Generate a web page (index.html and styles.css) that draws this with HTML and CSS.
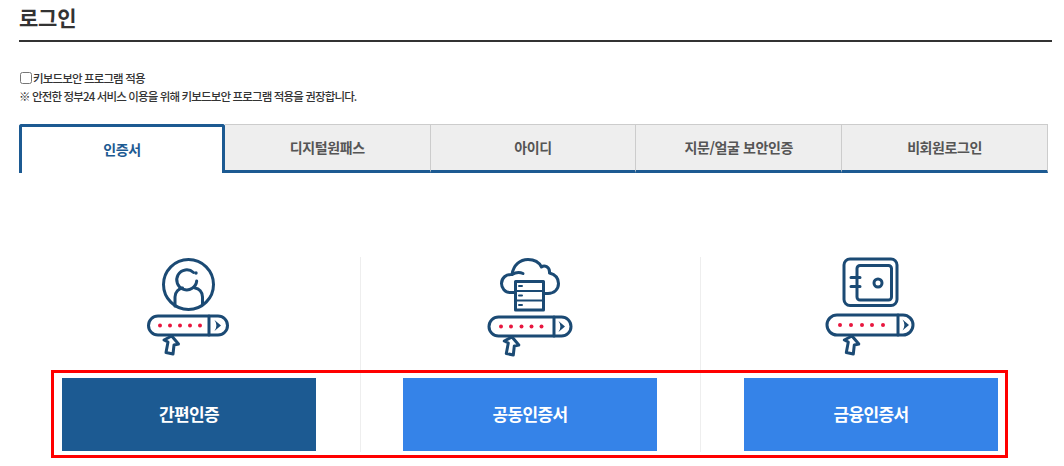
FILE: index.html
```html
<!DOCTYPE html>
<html lang="ko">
<head>
  <title>로그인</title>
  <meta charset="utf-8">
  <meta name="viewport" content="width=device-width, initial-scale=1">
  <link rel="stylesheet" href="styles.css">
</head>
<body>
  <!-- wrapper -->
  <div id="wrapper">
    <h1 class="page-title">로그인</h1>

    <div class="keyboard-area">
      <label class="keyboard-check"><input type="checkbox">키보드보안 프로그램 적용</label>
      <p class="keyboard-note">※ 안전한 정부24 서비스 이용을 위해 키보드보안 프로그램 적용을 권장합니다.</p>
    </div>

    <ul class="tabs">
      <li class="tab active">인증서</li>
      <li class="tab">디지털원패스</li>
      <li class="tab">아이디</li>
      <li class="tab">지문/얼굴 보안인증</li>
      <li class="tab">비회원로그인</li>
    </ul>

    <div class="cert-area">
      <div class="cert">
        <svg class="cert-icon" width="120" height="110" viewBox="-1 0 120 110" fill="none">
          <circle class="line" cx="58.500" cy="33.500" r="25"/>
          <path class="line" d="M63.500 21.500A10 10 0 1 0 66.700 30"/>
          <circle class="fill" cx="66" cy="22" r="1.700"/>
          <path class="line" d="M45 55V46C45 41 49 37.500 52.500 37M65 37C69 37.500 72.500 41 72.500 46V53"/>
          <rect class="line" x="18.500" y="65" width="79" height="19" rx="9.500"/>
          <path class="line" d="M79 65V84"/>
          <path class="fill" d="M84.500 69L91 74.500L84.500 80C87 76.500 87 72.500 84.500 69Z"/>
          <g class="dots"><circle cx="30" cy="74.500" r="2"/><circle cx="40" cy="74.500" r="2"/><circle cx="50" cy="74.500" r="2"/><circle cx="60" cy="74.500" r="2"/><circle cx="70" cy="74.500" r="2"/></g>
          <path class="line pointer" d="M41.700 85L48.500 93L44 94L43 103L36 101.500L38 91L34 89Z"/>
        </svg>
        <a class="cert-btn dark" href="#">간편인증</a>
      </div>
      <div class="cert">
        <svg class="cert-icon" width="120" height="110" viewBox="0 0 120 110" fill="none">
          <path class="line" d="M44 41.500H40C35 41.500 31.500 37 31.500 32.500C31.500 27 36 23 42 23.500C43.500 14 50 8.500 58 8.500C64 8.500 69 11 71.500 16C74 14 80 15 79.500 22C85 23.500 88.500 27.500 88.500 32.500C88.500 38.500 84 42.500 78 42.500H74"/>
          <path class="line" d="M53 22.500C50 21 46 21 42 23.500"/>
          <rect class="line" x="45.500" y="30.500" width="28" height="28.500"/>
          <path class="line thin" d="M45.500 40H73.500M45.500 49.500H73.500"/>
          <path class="line thin" d="M49 35H52M49 44.500H52M49 54H52"/>
          <rect class="line" x="19" y="66" width="82" height="19" rx="9.500"/>
          <path class="line" d="M84 66V85"/>
          <path class="fill" d="M88.500 70L95 75.500L88.500 81C91 77.500 91 73.500 88.500 70Z"/>
          <g class="dots"><circle cx="31" cy="75.500" r="2"/><circle cx="41" cy="75.500" r="2"/><circle cx="51.500" cy="75.500" r="2"/><circle cx="61.500" cy="75.500" r="2"/><circle cx="71.500" cy="75.500" r="2"/></g>
          <path class="line pointer" d="M42 86L48.800 94L44.300 95L43.300 104L36.300 102.500L38.300 92L34.300 90Z"/>
        </svg>
        <a class="cert-btn" href="#">공동인증서</a>
      </div>
      <div class="cert">
        <svg class="cert-icon" width="120" height="110" viewBox="1 0 120 110" fill="none">
          <rect class="line" x="34" y="8" width="53" height="46.500" rx="6"/>
          <rect class="line" x="47" y="14.500" width="34.500" height="34.500" rx="3"/>
          <path class="line" d="M41 26.500H50M41 35.500H50"/>
          <circle class="line" cx="68" cy="32" r="4"/>
          <rect class="line" x="17" y="64" width="86" height="20" rx="10"/>
          <path class="line" d="M88 64V84"/>
          <path class="fill" d="M92.500 68.500L99 74L92.500 79.500C95 76 95 72 92.500 68.500Z"/>
          <g class="dots"><circle cx="30" cy="74" r="2"/><circle cx="41" cy="74" r="2"/><circle cx="52" cy="74" r="2"/><circle cx="62" cy="74" r="2"/><circle cx="73" cy="74" r="2"/></g>
          <path class="line pointer" d="M42 85L48.800 93L44.300 94L43.300 103L36.300 101.500L38.300 91L34.300 89Z"/>
        </svg>
        <a class="cert-btn" href="#">금융인증서</a>
      </div>
      <div class="highlight"></div>
    </div>
  </div>
  <!-- end of wrapper -->
</body>
</html>
```

FILE: styles.css
```css
* {
  box-sizing: border-box;
}
body {
  margin: 0;
  background: #fff;
  font-family: "Noto Sans CJK KR", "Noto Sans", sans-serif;
  color: #333;
}
#wrapper {
  width: 1064px;
  height: 466px;
  padding: 0 12px 0 19px;
  overflow: hidden;
}
.page-title {
  height: 42px;
  margin: 0;
  border-bottom: 2px solid #333;
  font-size: 21px;
  line-height: 34px;
  font-weight: 700;
  letter-spacing: -0.2px;
}
.keyboard-area {
  height: 82px;
  padding-top: 27px;
  font-size: 11.5px;
  font-weight: 500;
  line-height: 18px;
  letter-spacing: -0.86px;
}
.keyboard-check {
  display: flex;
  align-items: center;
  height: 18px;
}
.keyboard-check input {
  width: 12px;
  height: 12px;
  margin: 0 1px 0 1px;
}
.keyboard-note {
  margin: 0;
}
.tabs {
  display: grid;
  grid-template-columns: repeat(5, 1fr);
  width: 1029px;
  height: 49px;
  margin: 0;
  padding: 0;
  list-style: none;
}
.tab {
  display: flex;
  align-items: center;
  justify-content: center;
  height: 49px;
  padding-bottom: 2px;
  border-top: 1px solid #ccc;
  border-right: 1px solid #ccc;
  border-bottom: 3px solid #1c5a92;
  background: #eee;
  font-size: 14px;
  font-weight: 700;
  letter-spacing: -0.4px;
  color: #555;
}
.tab.active {
  border: 3px solid #1c5a92;
  border-bottom: 0;
  border-radius: 3px 3px 0 0;
  background: #fff;
  color: #1c5a92;
}
.cert-area {
  position: relative;
  display: grid;
  grid-template-columns: 342px 340px 340px;
  margin-top: 84px;
}
.cert {
  display: flex;
  flex-direction: column;
  align-items: center;
  height: 195px;
  padding-right: 1px;
  border-right: 1px solid #eee;
}
.cert:nth-child(3) {
  padding-right: 0;
  border-right: 0;
}
.cert-icon {
  display: block;
  flex: none;
  margin: -6px 0 17px;
}
.cert-btn {
  display: flex;
  align-items: center;
  justify-content: center;
  width: 254px;
  height: 73px;
  padding-bottom: 2px;
  background: #3583e8;
  color: #fff;
  font-size: 17px;
  font-weight: 700;
  letter-spacing: -0.6px;
  text-decoration: none;
}
.cert-btn.dark {
  background: #1c5a92;
}
.line {
  stroke: #1b4a74;
  stroke-width: 3;
  stroke-linecap: round;
  stroke-linejoin: round;
}
.line.thin {
  stroke-width: 2;
}
.line.pointer {
  fill: #fff;
}
.fill {
  fill: #1b4a74;
}
.dots {
  fill: #e8173f;
}
.highlight {
  position: absolute;
  left: 32px;
  top: 113px;
  width: 957px;
  height: 88px;
  border: 3px solid #f00;
  pointer-events: none;
}
```
